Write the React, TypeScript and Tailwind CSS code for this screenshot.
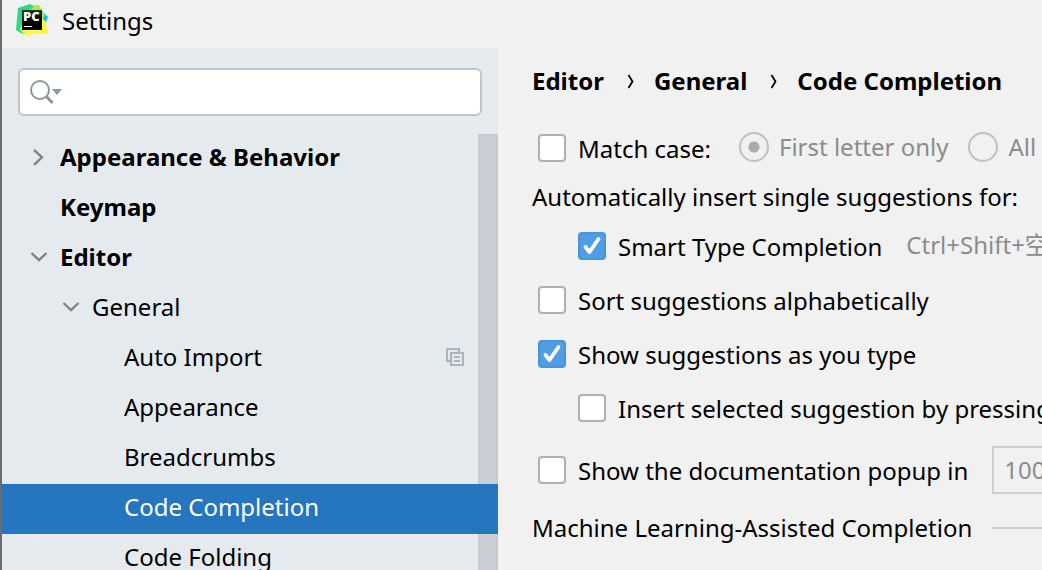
import React from 'react';

function Logo() {
  return (
    <svg width="32" height="32" viewBox="0 0 32 32" aria-hidden="true">
      <defs>
        <linearGradient id="green" x1="0" y1="0" x2="1" y2="1">
          <stop offset="0" stopColor="#21d789" />
          <stop offset="1" stopColor="#3ddc84" />
        </linearGradient>
        <linearGradient id="yellow" x1="0" y1="0" x2="1" y2="1">
          <stop offset="0" stopColor="#9be85c" />
          <stop offset="0.6" stopColor="#fcf84a" />
        </linearGradient>
        <linearGradient id="dark" x1="0" y1="0" x2="0" y2="1">
          <stop offset="0" stopColor="#303030" />
          <stop offset="0.5" stopColor="#000" />
        </linearGradient>
      </defs>
      <path d="M22 7 28 9 32 13 30 18 24 22Z" fill="#07c3f2" />
      <path d="M15 1 23 1 26 6 29 11 26 16 12 12Z" fill="#a5e95a" />
      <path d="M6 14 20 6 29 17 32 30 20 30 11 32 4 27Z" fill="url(#yellow)" />
      <path d="M2 4 14 0 18 3 11 8 4 25 8 31 0 26Z" fill="url(#green)" />
      <rect x="6" y="6" width="20" height="20" fill="url(#dark)" />
      <rect x="8" y="22" width="8" height="1" fill="#fff" />
      <text x="7" y="17" fill="#fff" fontSize="13" fontWeight="800" fontFamily="Open Sans, sans-serif">PC</text>
    </svg>
  );
}

function Arrow({ open }: { open?: boolean }) {
  return (
    <svg width="20" height="20" viewBox="0 0 20 20" fill="none" stroke="#7f8284" strokeWidth="2.3" aria-hidden="true">
      <path d={open ? 'M3.5 6 11 13.2 18.5 6' : 'M6 2.8 14 10.3 6 17.8'} />
    </svg>
  );
}

type Item = { label: string; level: 0 | 1 | 2; open?: boolean; branch?: boolean; selected?: boolean; copy?: boolean };

const items: Item[] = [
  { label: 'Appearance & Behavior', level: 0, branch: true },
  { label: 'Keymap', level: 0 },
  { label: 'Editor', level: 0, branch: true, open: true },
  { label: 'General', level: 1, branch: true, open: true },
  { label: 'Auto Import', level: 2, copy: true },
  { label: 'Appearance', level: 2 },
  { label: 'Breadcrumbs', level: 2 },
  { label: 'Code Completion', level: 2, selected: true },
  { label: 'Code Folding', level: 2 },
];

const indent = ['pl-[26px] font-bold', 'pl-[58px]', 'pl-[90px]'];

function TreeRow({ item }: { item: Item }) {
  return (
    <li>
      <button
        type="button"
        className={`flex h-[50px] w-full items-center gap-3 pr-[34px] pb-1 text-left ${indent[item.level]} ${
          item.selected ? 'bg-[#2675bf] text-white' : ''
        }`}
      >
        <span className="w-5 shrink-0">{item.branch && <Arrow open={item.open} />}</span>
        <span className="grow">{item.label}</span>
        {item.copy && (
          <svg width="18" height="18" viewBox="0 0 18 18" fill="none" stroke="#a8b5bd" strokeWidth="2" aria-hidden="true">
            <path d="M4 13H1V1H13V4M5 5H17V17H5ZM8 9H14M8 13H14" />
          </svg>
        )}
      </button>
    </li>
  );
}

function Check({ label, checked, nested }: { label: string; checked?: boolean; nested?: boolean }) {
  return (
    <label className={`flex shrink-0 items-center gap-3 ${nested ? 'pl-[46px]' : 'pl-[6px]'}`}>
      <span className="relative size-7 shrink-0">
        <input
          type="checkbox"
          defaultChecked={checked}
          className="peer block size-7 appearance-none rounded-[4px] border-2 border-[#b0b0b0] bg-white checked:border-[#4a94db] checked:bg-[#4f9ee3]"
        />
        <svg
          viewBox="0 0 28 28"
          className="pointer-events-none absolute inset-0 hidden size-7 peer-checked:block"
          fill="none"
          stroke="#fff"
          strokeWidth="3.8"
          strokeLinecap="round"
          strokeLinejoin="round"
          aria-hidden="true"
        >
          <path d="M7.5 15 11.5 20 20.5 7" />
        </svg>
      </span>
      <span className="pt-[2px]">{label}</span>
    </label>
  );
}

function Radio({ label, checked }: { label: string; checked?: boolean }) {
  return (
    <label className="flex shrink-0 items-center gap-[10px] pb-[2px] text-[#8c8c8c]">
      <input
        type="radio"
        name="case"
        disabled
        defaultChecked={checked}
        className="size-[30px] shrink-0 appearance-none rounded-full border-2 border-[#c0c0c0] checked:bg-[radial-gradient(circle,#ababab_5px,transparent_6px)]"
      />
      {label}
    </label>
  );
}

function Separator() {
  return (
    <svg width="10" height="16" viewBox="0 0 10 16" fill="none" stroke="#000" strokeWidth="1.8" aria-hidden="true">
      <path d="M4.5 2 8.5 8.5 4.5 15" />
    </svg>
  );
}

export default function App() {
  return (
    <div className="flex h-screen flex-col overflow-hidden border-l-2 border-[#6c6c6c] bg-[#f1f1f1] font-['Noto_Sans','Noto_Sans_CJK_SC',sans-serif] text-[24px] leading-8 whitespace-nowrap text-black">
      <header className="flex h-12 shrink-0 items-center gap-[14px] pb-2 pl-[14px]">
        <Logo />
        <h1 className="pt-[2px]">Settings</h1>
      </header>
      <div className="flex min-h-0 grow">
        <aside className="flex w-[496px] shrink-0 flex-col bg-[#e5eaee]">
          <div className="px-4 pt-5 pb-[18px]">
            <label className="flex h-12 items-center rounded-[6px] border-2 border-[#c4c4c4] bg-white pl-[10px]">
              <svg width="34" height="26" viewBox="0 0 34 26" fill="none" aria-label="Search">
                <circle cx="10" cy="11" r="9" stroke="#8d979e" strokeWidth="2" />
                <path d="M16 17 22.5 24" stroke="#8d979e" strokeWidth="3" />
                <path d="M22 10H32L27 16Z" fill="#8d979e" />
              </svg>
              <input type="text" aria-label="Search settings" className="min-w-0 grow bg-transparent outline-none" />
            </label>
          </div>
          <nav className="relative min-h-0 grow overflow-hidden">
            <ul>
              {items.map((item) => (
                <TreeRow key={item.label} item={item} />
              ))}
            </ul>
            <div className="absolute top-0 right-0 h-[350px] w-5 border-x-2 border-t-2 border-[#c6c9ce] bg-[#cbced4]" />
            <div className="absolute top-[400px] right-0 bottom-0 w-5 border-x-2 border-[#c6c9ce] bg-[#cbced4]" />
          </nav>
        </aside>
        <main className="min-w-0 grow overflow-hidden pl-[34px]">
          <nav className="flex h-[75px] items-center gap-5 pb-[10px] font-bold">
            <a href="#editor">Editor</a>
            <Separator />
            <a href="#general">General</a>
            <Separator />
            <a href="#completion">Code Completion</a>
          </nav>
          <div className="flex h-[50px] items-center">
            <Check label="Match case:" />
            <div className="flex gap-5 pl-7">
              <Radio label="First letter only" checked />
              <Radio label="All letters" />
            </div>
          </div>
          <p className="flex h-[46px] items-center pt-[2px]">Automatically insert single suggestions for:</p>
          <div className="flex h-[54px] items-center gap-6">
            <Check label="Smart Type Completion" checked nested />
            <span className="pb-[2px] text-[#8c8c8c]">Ctrl+Shift+空格</span>
          </div>
          <div className="flex h-[54px] items-center">
            <Check label="Sort suggestions alphabetically" />
          </div>
          <div className="flex h-[54px] items-center">
            <Check label="Show suggestions as you type" checked />
          </div>
          <div className="flex h-[54px] items-center">
            <Check label="Insert selected suggestion by pressing space, dot, or other context-dependent keys" nested />
          </div>
          <div className="flex h-[70px] items-center gap-6">
            <Check label="Show the documentation popup in" />
            <input
              type="text"
              disabled
              defaultValue="1000"
              aria-label="Popup delay"
              className="h-12 w-[120px] shrink-0 border-2 border-[#cfcfcf] px-[10px] pb-[2px] text-[#8c8c8c]"
            />
          </div>
          <div className="flex h-[46px] items-center gap-5">
            <h2>Machine Learning-Assisted Completion</h2>
            <hr className="grow border-t-2 border-[#cfcfcf]" />
          </div>
        </main>
      </div>
    </div>
  );
}
